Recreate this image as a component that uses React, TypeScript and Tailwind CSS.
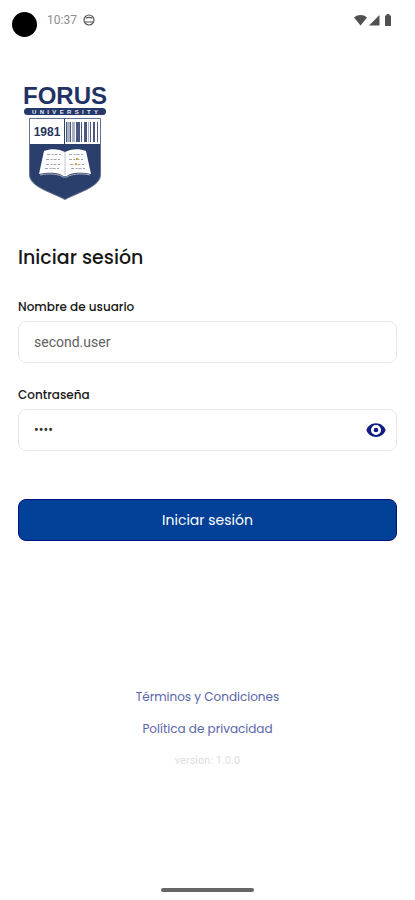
import { useState } from "react";

function StatusBar() {
  return (
    <header className="flex h-10 items-start justify-between pt-3 pr-[23px] pl-3">
      <div className="flex items-start">
        <span className="size-[25px] rounded-full bg-black" />
        <span className="ml-2.5 font-[Roboto,sans-serif] text-xs leading-4 text-[#8c8c8c]">10:37</span>
        <svg viewBox="0 0 12 12" className="mt-0.5 ml-1.5 size-3" fill="none" stroke="#555" strokeWidth="1.2">
          <circle cx="6" cy="6" r="5" />
          <path d="M1.500 8h9M3 4.500C4 3 8 3 9 4.500" />
        </svg>
      </div>
      <div className="flex items-center pt-0.5" aria-hidden="true">
        <svg viewBox="0 0 13 12" className="h-3 w-[13px]" fill="#505050">
          <path d="M0 3.500C3.500.2 9.500.2 13 3.500L6.500 11.500Z" />
        </svg>
        <svg viewBox="0 0 11 12" className="ml-0.5 h-3 w-[11px]" fill="#505050">
          <path d="M10.500 1v10.500H0Z" />
        </svg>
        <svg viewBox="0 0 8 12" className="ml-1 h-3 w-2" fill="#505050">
          <path d="M2.500 0h3v1.500H7V12H1V1.500h1.500Z" />
        </svg>
      </div>
    </header>
  );
}

function Logo() {
  return (
    <svg viewBox="-1 -4 86 124" className="mt-10 ml-1 h-[124px] w-[86px]" role="img" aria-label="Forus University 1981">
      <text x="42" y="20" textAnchor="middle" fontFamily="Liberation Sans, Arial, sans-serif" fontSize="24" fontWeight="700" fill="#1f3264">
        FORUS
      </text>
      <rect x="1" y="24" width="82" height="7" rx="3.5" fill="#24386a" />
      <text x="42" y="30" textAnchor="middle" fontFamily="Liberation Sans, Arial, sans-serif" fontSize="6" fontWeight="700" fill="#e6eaf2">
        {"UNIVERSITY".split("").join("\u00a0\u00a0")}
      </text>
      <path d="M6.500 34.500h71v56c0 12-20 17-35.500 25C26.500 107.500 6.500 102.500 6.500 90.500Z" fill="#2b3f6d" stroke="#63708f" />
      <path d="M7 35h34v25H7ZM42 35h35v25H42Z" fill="#fff" />
      <text x="24" y="52" textAnchor="middle" fontFamily="Liberation Sans, Arial, sans-serif" fontSize="12" fontWeight="700" fill="#27365c">
        1981
      </text>
      <path d="M43 38h1v20h-1ZM47 38h1v20h-1ZM53 38h4v20h-4ZM58 38h1v20h-1ZM61 38h3v20h-3ZM67 38h1v20h-1ZM70 38h2v20h-2ZM74 38h1v20h-1Z" fill="#4a5880" />
      <path d="M44 38h3v20h-3ZM49 38h3v20h-3ZM65 38h1v20h-1Z" fill="#a9b0c3" />
      <path d="M21 67c7-3 16-2 21 1 5-3 14-4 21-1l5 23c-9-2-20-2-24 2h-4c-4-4-15-4-24-2Z" fill="#fff" />
      <path d="M17 91c9-2 19-1 23 2h4c4-3 14-4 23-2" fill="none" stroke="#aeb4bf" />
      <path d="M42 68v23" stroke="#c2c6cf" />
      <path
        d="M24 70.500h14M23 75.500h15M23 80.500h14M22 84.500h14M46 70.500h14M46 75.500h15M47 80.500h15M48 84.500h14"
        fill="none"
        stroke="#a2a5ae"
        strokeDasharray="3 1.500 2 1"
      />
      <path d="M53 74h2v2h-2ZM52 79h2v2h-2Z" fill="#d1a43b" />
    </svg>
  );
}

export default function App() {
  const [username, setUsername] = useState("second.user");
  const [password, setPassword] = useState("1234");
  const [visible, setVisible] = useState(false);

  return (
    <div className="flex min-h-screen flex-col bg-white font-[Poppins,Inter,sans-serif] text-[#171717]">
      <StatusBar />
      <main className="flex flex-1 flex-col px-[18px]">
        <Logo />
        <h1 className="mt-10 text-[19px] leading-7 font-medium">Iniciar sesión</h1>
        <form className="flex flex-col" onSubmit={(event) => event.preventDefault()}>
          <label htmlFor="username" className="mt-[26px] text-xs leading-[18px] font-medium">
            Nombre de usuario
          </label>
          <input
            id="username"
            value={username}
            onChange={(event) => setUsername(event.target.value)}
            className="mt-[5px] h-[42px] w-full rounded-lg border border-[#e8e8e8] px-[15px] font-[Roboto,sans-serif] text-sm text-[#626262] outline-none"
          />
          <label htmlFor="password" className="mt-[23px] text-xs leading-[18px] font-medium">
            Contraseña
          </label>
          <div className="mt-[5px] flex h-[42px] items-center rounded-lg border border-[#e8e8e8] px-[15px]">
            <input
              id="password"
              type={visible ? "text" : "password"}
              value={password}
              onChange={(event) => setPassword(event.target.value)}
              className="min-w-0 flex-1 font-[Roboto,sans-serif] text-sm text-[#303030] outline-none"
            />
            <button type="button" aria-label="Mostrar contraseña" onClick={() => setVisible(!visible)} className="-mr-1.5">
              <svg viewBox="0 0 24 24" className="size-[22px]" fill="#101d83" fillRule="evenodd">
                <path d="M12 4.500C7 4.500 2.730 7.500 1.500 12c1.230 4.500 5.500 7.500 10.500 7.500s9.270-3 10.500-7.500C21.270 7.500 17 4.500 12 4.500ZM12 17.500a5.500 5.500 0 1 1 0-11 5.500 5.500 0 0 1 0 11Z" />
                <circle cx="12" cy="12" r="2.5" />
              </svg>
            </button>
          </div>
          <button type="submit" className="mt-12 h-[42px] rounded-lg border border-[#001582] bg-[#004096] text-sm text-white">
            Iniciar sesión
          </button>
        </form>
        <footer className="mt-[146px] flex flex-col items-center gap-3 text-xs leading-5 text-[#5963a8]">
          <a href="#terminos">Términos y Condiciones</a>
          <a href="#privacidad">Política de privacidad</a>
          <p className="font-[Roboto,sans-serif] text-[11px] text-[#dedede]">version: 1.0.0</p>
        </footer>
      </main>
      <div className="mb-2 h-1 w-[93px] self-center rounded-full bg-[#666]" />
    </div>
  );
}
